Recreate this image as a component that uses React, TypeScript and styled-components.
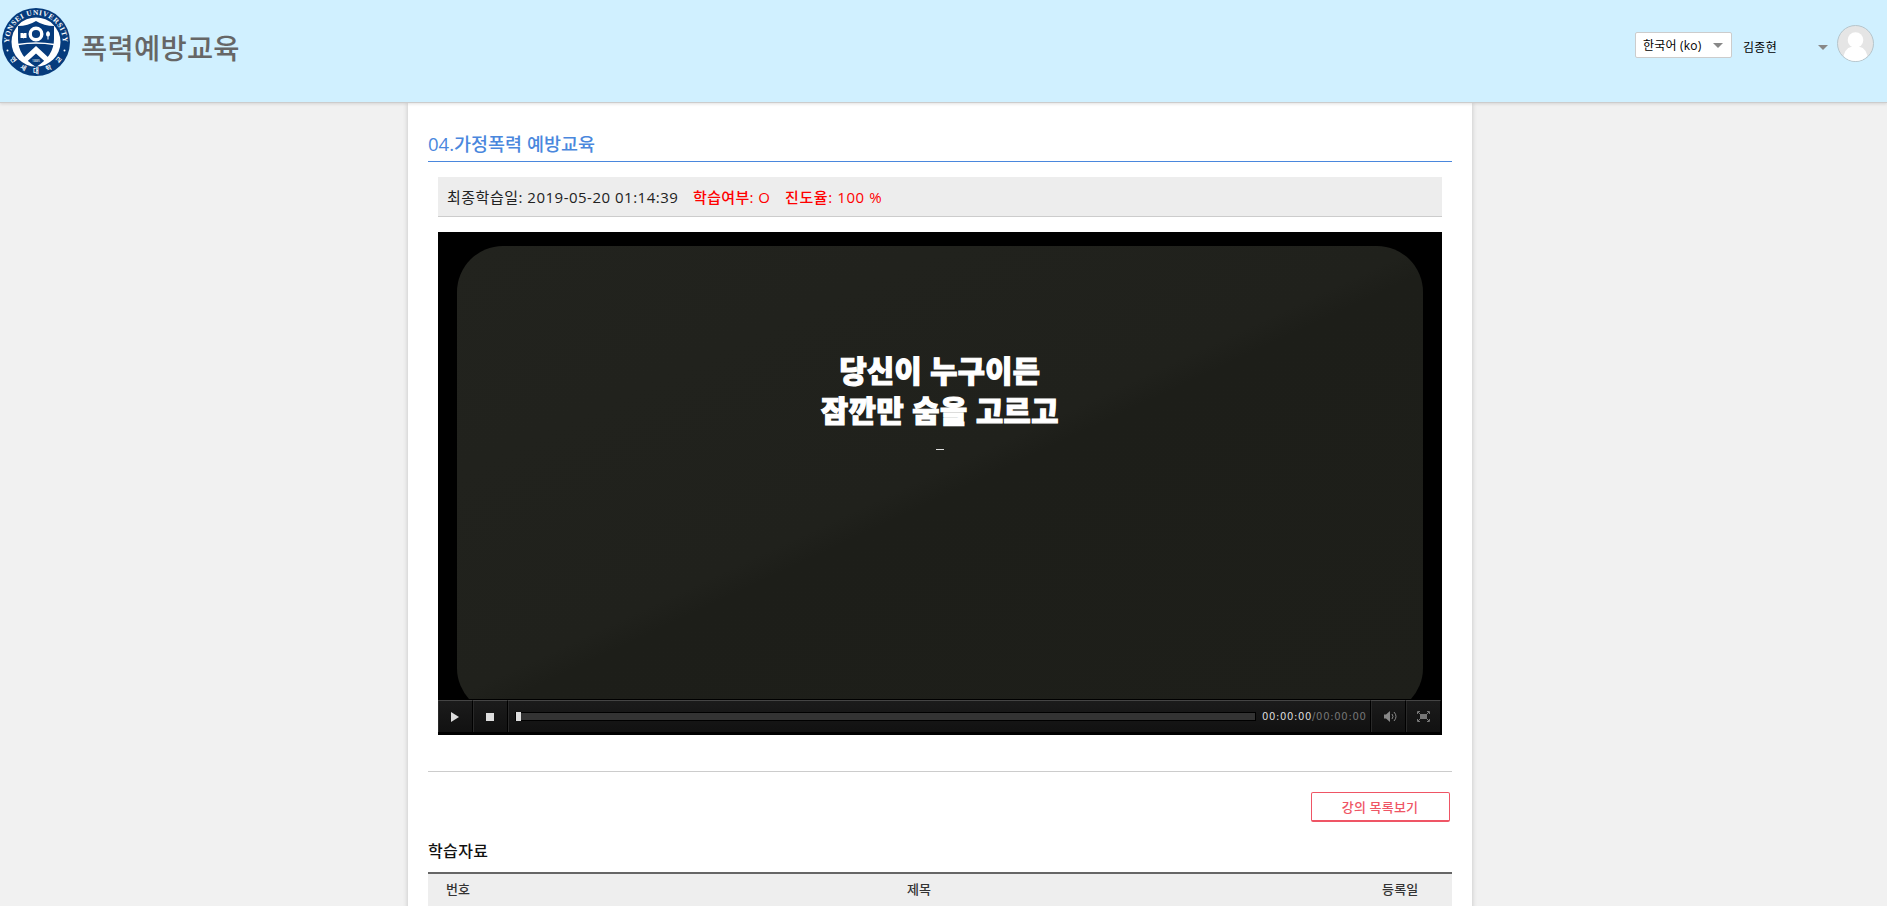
import React from "react";
import styled, { createGlobalStyle } from "styled-components";

const Global = createGlobalStyle`
  *{box-sizing:border-box}
  html,body,#root{height:100%}
  body{margin:0;background:#f1f1f1;overflow:hidden;font-family:"Open Sans","Noto Sans CJK KR",sans-serif;color:#222}
  h1,h2,h3,p{margin:0;font-weight:400}
  button{font-family:inherit}
`;

/* One run of text in a fixed-width slot so the neighbours stay aligned */
const Text = styled.span<{ $w: number; $size: number; $color?: string; $weight?: number; $track?: number }>`
  display: block;
  flex: none;
  width: ${(p) => p.$w}px;
  font-size: ${(p) => p.$size}px;
  font-weight: ${(p) => p.$weight ?? 400};
  letter-spacing: ${(p) => p.$track ?? 0}px;
  color: ${(p) => p.$color ?? "inherit"};
  white-space: nowrap;
`;
const Time = styled(Text)`
  font-family: "DejaVu Sans", sans-serif;
`;

const Page = styled.div`
  display: flex;
  flex-direction: column;
  height: 906px;
  overflow: hidden;
`;
const Header = styled.header`
  position: relative;
  z-index: 1;
  flex: none;
  display: flex;
  justify-content: space-between;
  align-items: flex-start;
  height: 103px;
  background: #d0f0ff;
  border-bottom: 1px solid #ccc;
  box-shadow: 0 1px 3px rgba(0, 0, 0, 0.12);
`;
const Brand = styled.div`
  display: flex;
  padding: 8px 0 0 2px;
  gap: 11px;
`;
const SiteName = styled.h1`
  margin-top: 21px;
  line-height: 38px;
`;
const Tools = styled.div`
  display: flex;
  padding: 25px 13px 0 0;
`;
const LangSelect = styled.div`
  display: flex;
  align-items: center;
  justify-content: space-between;
  width: 97px;
  height: 26px;
  margin-top: 7px;
  padding: 0 8px 0 7px;
  background: #fff;
  border: 1px solid #ccc;
  border-radius: 2px;
  color: #000;
`;
const User = styled.div`
  display: flex;
  align-items: center;
  justify-content: space-between;
  width: 85px;
  height: 26px;
  margin: 9px 9px 0 11px;
  color: #000;
`;
const Caret = styled.i`
  border: 5px solid transparent;
  border-top-color: #888;
  border-bottom: 0;
`;
const Content = styled.main`
  flex: 1;
  align-self: flex-start;
  width: 1064px;
  margin-left: 408px;
  padding: 0 20px;
  background: #fff;
  box-shadow: 0 0 5px rgba(0, 0, 0, 0.2);
`;
const Title = styled.h2`
  display: flex;
  align-items: center;
  height: 59px;
  padding-top: 21px;
  border-bottom: 1px solid #4a87dd;
  color: #4a87dd;
`;
const Info = styled.div`
  display: flex;
  align-items: center;
  gap: 14px;
  height: 40px;
  margin: 15px 10px;
  padding: 0 0 1px 9px;
  background: #ededed;
  border-bottom: 1px solid #ccc;
`;
const Player = styled.section`
  display: flex;
  flex-direction: column;
  height: 503px;
  margin: 0 10px 36px;
  background: #000;
`;
const Stage = styled.div`
  flex: 1;
  min-height: 0;
  overflow: hidden;
  padding: 14px 19px 0;
`;
const Screen = styled.div`
  display: flex;
  flex-direction: column;
  align-items: center;
  height: 468px;
  padding-top: 105px;
  border-radius: 46px;
  background: linear-gradient(155deg, #22231e 0%, #20211c 49%, #1d1e19 52%, #1e1f1a 100%);
  color: #fff;
`;
const Caption = styled.p`
  line-height: 40px;
  -webkit-text-stroke: 1.2px #fff;
`;
const Cursor = styled.i`
  width: 8px;
  height: 1px;
  margin-top: 18px;
  background: #ddd;
`;
const Controls = styled.div`
  display: flex;
  height: 36px;
  border-top: 1px solid #000;
  border-bottom: 3px solid #000;
  padding-right: 1px;
`;
const Cell = styled.div<{ $w?: number; $shift?: number }>`
  display: flex;
  align-items: center;
  justify-content: center;
  ${(p) => (p.$w ? `width:${p.$w}px;padding-left:${p.$shift ?? 0}px;` : "flex:1;padding:0 4px 0 7px;")}
  border-top: 1px solid #444;
  border-right: 1px solid #000;
  box-shadow: inset 1px 0 #292929;
  background: linear-gradient(#1b1b1b, #111);
`;
const Track = styled.div`
  flex: 1;
  height: 9px;
  margin-right: 6px;
  border: 1px solid #000;
  background: #333;
`;
const Knob = styled.div`
  width: 5px;
  height: 9px;
  margin: -1px 0;
  background: #ddd;
`;
const Foot = styled.div`
  display: flex;
  justify-content: flex-end;
  height: 72px;
  padding: 20px 2px 0 0;
  border-top: 1px solid #ccc;
`;
const ListButton = styled.button`
  display: flex;
  align-items: center;
  justify-content: center;
  width: 139px;
  height: 30px;
  padding: 0 1px 0 0;
  background: #fff;
  border: 1px solid #ef5565;
  border-bottom-width: 2px;
  border-radius: 2px;
  color: #ef5565;
`;
const SubTitle = styled.h3`
  height: 29px;
  line-height: 17px;
  color: #111;
`;
const TableHead = styled.div`
  display: grid;
  grid-template-columns: 61px 1fr 103px;
  justify-items: center;
  height: 40px;
  padding-top: 5px;
  border-top: 2px solid #666;
  background: #eee;
  line-height: 21px;
  color: #333;
`;

const MOTTO: [string, number][] = [["연", 52], ["세", 26], ["대", 0], ["학", -26], ["교", -52]];

function Crest() {
  return (
    <svg width="68" height="68" viewBox="0 0 68 68">
      <defs>
        <path id="top" d="M7.300 36 A26.800 26.800 0 1 1 60.700 36" />
      </defs>
      <circle cx="34" cy="34" r="34" fill="#063b7c" />
      <circle cx="34" cy="34" r="24.500" fill="#fff" />
      <path d="M34 13 Q42 18 52 18 V31 Q52 48 34 59 Q16 48 16 31 V18 Q26 18 34 13Z" fill="#063b7c" />
      <path d="M16 36.500 Q34 33.500 52 36.500" stroke="#fff" strokeWidth="1.300" fill="none" />
      <circle cx="34" cy="26" r="5.800" stroke="#fff" strokeWidth="3.400" fill="none" />
      <path d="M34 38 L48 51 L44 54.500 L34 45.500 L24 54.500 L20 51Z" fill="#fff" />
      <path d="M18.500 25h2.400l.6.6.6-.6h2.400v5h-2.400l-.6.5-.6-.5h-2.400z" fill="#fff" />
      <path d="M46 23q3 1.500 1.500 5l-1 .5v3h-1v-3l-1-.5q-1.500-3.500 1.500-5z" fill="#fff" />
      <circle cx="5.500" cy="42.500" r="1" fill="#fff" />
      <circle cx="62.500" cy="42.500" r="1" fill="#fff" />
      <text fontSize="3.500" fill="#fff" x="34" y="53.500" textAnchor="middle">1885</text>
      <text fontSize="7.400" fontFamily="Liberation Serif" fontWeight="700" fill="#fff">
        <textPath href="#top" textLength="86" startOffset="1">YONSEI UNIVERSITY</textPath>
      </text>
      {MOTTO.map(([glyph, angle]) => (
        <text key={glyph} x="34" y="65" fontSize="6.300" fontFamily="Noto Sans CJK KR" fontWeight="700" fill="#fff" textAnchor="middle" transform={`rotate(${angle} 34 34)`}>{glyph}</text>
      ))}
    </svg>
  );
}

function Avatar() {
  return (
    <svg width="37" height="37" viewBox="0 0 37 37">
      <defs><clipPath id="av"><circle cx="18.500" cy="18.500" r="17.500" /></clipPath></defs>
      <circle cx="18.500" cy="18.500" r="18" fill="#e5e5e5" stroke="#b5c5cc" />
      <g clipPath="url(#av)" fill="#fff">
        <circle cx="18.500" cy="15" r="7.800" />
        <path d="M5 37 Q8 22 14 22 H23 Q29 22 32 37Z" />
      </g>
    </svg>
  );
}

export default function App() {
  return (
    <Page>
      <Global />
      <Header>
        <Brand>
          <Crest />
          <SiteName><Text $w={160} $size={28.5} $weight={500} $track={0.25} $color="#666">폭력예방교육</Text></SiteName>
        </Brand>
        <Tools>
          <LangSelect><Text $w={60} $size={12} $track={0.2}>한국어 (ko)</Text><Caret /></LangSelect>
          <User><Text $w={35} $size={12} $track={0.3}>김종현</Text><Caret /></User>
          <Avatar />
        </Tools>
      </Header>
      <Content>
        <Title><Text $w={168} $size={18.5} $weight={500}>04.가정폭력 예방교육</Text></Title>
        <Info>
          <Text $w={232} $size={15} $track={0.5}>최종학습일: 2019-05-20 01:14:39</Text>
          <Text $w={78} $size={15} $weight={500} $track={0.35} $color="#f00">학습여부: O</Text>
          <Text $w={98} $size={15} $weight={500} $track={0.6} $color="#f00">진도율: 100 %</Text>
        </Info>
        <Player>
          <Stage>
            <Screen>
              <Caption><Text $w={201} $size={29.5} $weight={900} $track={0.4}>당신이 누구이든</Text></Caption>
              <Caption><Text $w={238} $size={29.5} $weight={900} $track={0.55}>잠깐만 숨을 고르고</Text></Caption>
              <Cursor />
            </Screen>
          </Stage>
          <Controls>
            <Cell $w={35}><svg width="8" height="10"><path d="M0 0L8 5L0 10Z" fill="#ddd" /></svg></Cell>
            <Cell $w={35}><svg width="8" height="8"><path d="M0 0H8V8H0Z" fill="#ddd" /></svg></Cell>
            <Cell>
              <Track><Knob /></Track>
              <Time $w={50} $size={10} $track={0.65} $color="#ddd">00:00:00</Time>
              <Time $w={54} $size={10} $track={0.7} $color="#777">/00:00:00</Time>
            </Cell>
            <Cell $w={35} $shift={4}>
              <svg width="13" height="11" fill="none" stroke="#888"><path d="M0 3.500H2L6 0V11L2 7.500H0Z" fill="#888" stroke="none" /><path d="M8 3Q10 5.500 8 8M10 1Q14 5.500 10 10" /></svg>
            </Cell>
            <Cell $w={35} $shift={1}>
              <svg width="13" height="11" fill="none" stroke="#777"><path d="M.5 3V.5H3M10 .5H12.500V3M12.500 8V10.500H10M3 10.500H.5V8M1 1L3 3M12 1L10 3M1 10L3 8M12 10L10 8" /><path d="M3 3H10V8H3Z" fill="#777" stroke="none" /></svg>
            </Cell>
          </Controls>
        </Player>
        <Foot><ListButton><Text $w={77} $size={13} $track={0.2} $weight={500}>강의 목록보기</Text></ListButton></Foot>
        <SubTitle><Text $w={61} $size={16} $track={0.4} $weight={500}>학습자료</Text></SubTitle>
        <TableHead>
          <Text $w={25} $size={13} $weight={500}>번호</Text>
          <Text $w={24} $size={13} $weight={500}>제목</Text>
          <Text $w={37} $size={13} $weight={500} $track={0.2}>등록일</Text>
        </TableHead>
      </Content>
    </Page>
  );
}
